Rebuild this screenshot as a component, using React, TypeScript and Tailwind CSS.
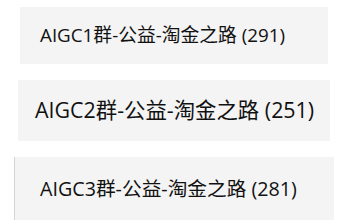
const groups = [
  { name: 'AIGC1群-公益-淘金之路', count: 291, box: 'ml-[20px] mt-[7px] w-[308px] h-[57px] pl-[20px] text-[18.8px]' },
  { name: 'AIGC2群-公益-淘金之路', count: 251, box: 'ml-[18px] mt-[16px] w-[312px] h-[61px] pl-[17px] text-[21.4px]' },
  { name: 'AIGC3群-公益-淘金之路', count: 281, box: 'ml-[14px] mt-[16px] w-[320px] h-[64px] pl-[25px] text-[19.7px] border-l border-[#d4d4d4]' },
]

export default function App() {
  return (
    <div className="w-[359px] h-[220px] overflow-hidden bg-white font-['Open_Sans','Noto_Sans_CJK_SC',sans-serif] text-[#111]">
      {groups.map((g) => (
        <div key={g.count} className={`flex items-center whitespace-nowrap bg-[#f4f4f4] ${g.box}`}>
          {g.name} ({g.count})
        </div>
      ))}
    </div>
  )
}
